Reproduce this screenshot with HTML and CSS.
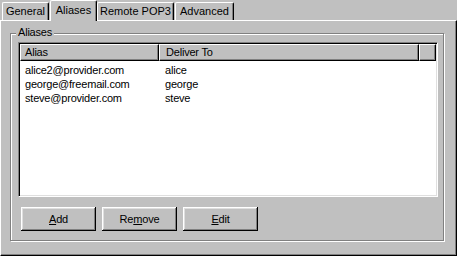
FILE: index.html
```html
<!DOCTYPE html>
<html>
<head>
<meta charset="utf-8">
<link rel="stylesheet" href="styles.css">
</head>
<body>
<div class="window">
  <div class="tabs">
    <div class="tab tab-general">General</div>
    <div class="tab tab-active tab-aliases">Aliases</div>
    <div class="tab tab-remote">Remote POP3</div>
    <div class="tab tab-advanced">Advanced</div>
  </div>
  <div class="panel">
    <div class="group">
      <div class="group-label">Aliases</div>
      <div class="list">
        <div class="list-header">
          <div class="hcell hcell-alias">Alias</div>
          <div class="hcell hcell-deliver">Deliver To</div>
          <div class="hcell hcell-fill"></div>
        </div>
        <div class="list-body">
          <div class="row"><span class="c1">alice2@provider.com</span><span class="c2">alice</span></div>
          <div class="row"><span class="c1">george@freemail.com</span><span class="c2">george</span></div>
          <div class="row"><span class="c1">steve@provider.com</span><span class="c2">steve</span></div>
        </div>
      </div>
      <div class="buttons">
        <div class="btn"><u>A</u>dd</div>
        <div class="btn">Re<u>m</u>ove</div>
        <div class="btn"><u>E</u>dit</div>
      </div>
    </div>
  </div>
</div>
</body>
</html>
```
FILE: styles.css
```css
html, body {
  margin: 0;
  padding: 0;
  background: #c0c0c0;
}
body {
  font-family: "Liberation Sans", Arial, sans-serif;
  font-size: 11px;
  letter-spacing: -0.2px;
  color: #000;
  width: 457px;
  height: 256px;
  overflow: hidden;
}
.window {
  width: 457px;
  height: 256px;
  display: flex;
  flex-direction: column;
}
.tabs {
  display: flex;
  align-items: flex-end;
  height: 20px;
  padding-left: 2px;
  position: relative;
  z-index: 2;
}
.tab {
  box-sizing: border-box;
  height: 18px;
  border-top: 1px solid #fff;
  border-left: 1px solid #fff;
  border-right: 1px solid #000;
  box-shadow: inset -1px 0 #808080;
  border-radius: 2px 2px 0 0;
  display: flex;
  align-items: center;
  justify-content: center;
  padding-bottom: 1px;
  letter-spacing: 0;
}
.tab-general { width: 47px; }
.tab-aliases { width: 47px; margin-left: 1px; }
.tab-remote { width: 77px; margin-left: 0; }
.tab-advanced { width: 59px; margin-left: 1px; }
.tab-active {
  height: 21px;
  margin-bottom: -1px;
  padding-bottom: 3px;
  background: #c0c0c0;
}
.panel {
  box-sizing: border-box;
  width: 457px;
  height: 236px;
  border-top: 1px solid #fff;
  border-left: 1px solid #fff;
  border-right: 1px solid #000;
  border-bottom: 1px solid #000;
  box-shadow: inset -1px -1px #808080;
  padding: 12px 0 0 9px;
  position: relative;
  z-index: 1;
}
.group {
  position: relative;
  box-sizing: border-box;
  width: 434px;
  height: 208px;
  border: 1px solid #808080;
  box-shadow: inset 1px 1px #fff, 1px 1px #fff;
  padding: 8px 0 0 7px;
}
.group-label {
  position: absolute;
  top: -8px;
  left: 5px;
  padding: 0 2px;
  background: #c0c0c0;
  line-height: 13px;
}
.list {
  box-sizing: border-box;
  width: 420px;
  height: 155px;
  background: #fff;
  border-top: 1px solid #808080;
  border-left: 1px solid #808080;
  border-right: 1px solid #fff;
  border-bottom: 1px solid #fff;
  box-shadow: inset 1px 1px #000, inset -1px -1px #dfdfdf;
  padding: 1px;
}
.list-header {
  display: grid;
  grid-template-columns: 139px 260px 1fr;
  height: 17px;
}
.hcell {
  box-sizing: border-box;
  background: #c0c0c0;
  border-top: 1px solid #fff;
  border-left: 1px solid #fff;
  border-right: 1px solid #000;
  border-bottom: 1px solid #000;
  box-shadow: inset -1px -1px #808080;
  line-height: 14px;
  white-space: nowrap;
}
.hcell-alias { padding-left: 4px; }
.hcell-deliver { padding-left: 6px; }
.list-body {
  padding-top: 2px;
}
.row {
  display: grid;
  grid-template-columns: 141px 1fr;
  height: 14px;
  line-height: 14px;
  white-space: nowrap;
}
.c1 { padding-left: 5px; }
.c2 { padding-left: 4px; }
.buttons {
  display: flex;
  gap: 6px;
  margin-top: 10px;
  margin-left: 3px;
}
.btn {
  box-sizing: border-box;
  width: 75px;
  height: 24px;
  display: flex;
  align-items: center;
  justify-content: center;
  box-shadow: inset -1px -1px #000, inset 1px 1px #fff, inset -2px -2px #808080, inset 2px 2px #dfdfdf;
}
.btn u {
  text-decoration-thickness: 1px;
  text-underline-offset: 1px;
}
```
